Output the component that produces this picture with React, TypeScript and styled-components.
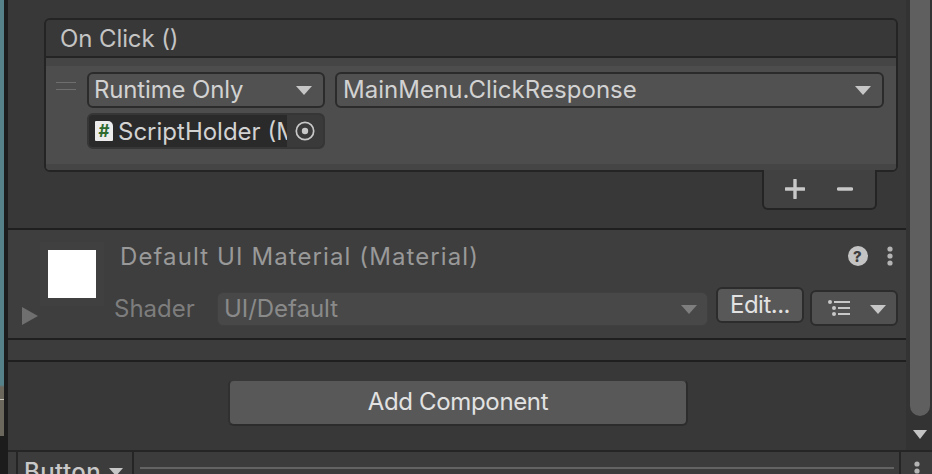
import React from 'react';
import styled, {createGlobalStyle} from 'styled-components';

const GlobalStyle = createGlobalStyle`
  html, body {
    margin: 0;
    width: 932px;
    height: 474px;
    overflow: hidden;
    background: #383838;
    font-family: Inter, "Noto Sans", sans-serif;
  }
`;

const Window = styled.div`
  display: grid;
  grid-template-columns: 8px 1fr;
  width: 932px;
  height: 474px;
  overflow: hidden;
`;

const LeftEdge = styled.div`
  display: grid;
  grid-template-columns: 4px 4px;
  background: #1c1c1c;
`;

const SceneStrip = styled.div`
  height: 436px;
  background: linear-gradient(#54818a 0, #54818a 385px, #6c675d 387px, #6c675d 399px, #c9c5bb 399px, #c9c5bb 400px, #6c675d 400px);
`;

const Main = styled.div`
  display: flex;
  flex-direction: column;
  min-width: 0;
`;

const Inspector = styled.div`
  display: grid;
  grid-template-columns: 898px 26px;
  height: 450px;
`;

const Content = styled.div`
  display: flex;
  flex-direction: column;
  background: #383838;
`;

const EventArea = styled.div`
  box-sizing: border-box;
  height: 230px;
  padding: 18px 0 0 36px;
  border-bottom: 2px solid #1f1f1f;
`;

const EventPanel = styled.div`
  width: 854px;
  height: 154px;
  box-sizing: border-box;
  border: 2px solid #242424;
  border-radius: 6px;
  overflow: hidden;
  display: flex;
  flex-direction: column;
`;

const EventHeader = styled.div`
  height: 38px;
  flex: none;
  box-sizing: border-box;
  padding-left: 14px;
  border-bottom: 2px solid #242424;
  background: #383838;
  color: #c4c4c4;
  font-size: 24px;
  line-height: 38px;
  letter-spacing: -0.1px;
`;

const EventBody = styled.div`
  flex: 1;
  background: #4d4d4d;
  border-top: 8px solid #454545;
  border-bottom: 6px solid #454545;
  display: grid;
  grid-template-columns: 21px 238px 549px;
  column-gap: 10px;
  padding: 6px 0 0 10px;
  align-content: start;
`;

const DragHandle = styled.div`
  width: 20px;
  height: 8px;
  margin-top: 10px;
  border-top: 1px solid #6e6e6e;
  border-bottom: 1px solid #6e6e6e;
  box-sizing: border-box;
`;

const Dropdown = styled.div<{$dim?: boolean}>`
  display: flex;
  align-items: center;
  justify-content: space-between;
  height: 36px;
  box-sizing: border-box;
  padding: 0 11px 2px 5px;
  border: 2px solid ${p => (p.$dim ? '#3a3a3a' : '#2b2b2b')};
  border-radius: 6px;
  background: ${p => (p.$dim ? '#484848' : '#515151')};
  color: ${p => (p.$dim ? '#8a8a8a' : '#d2d2d2')};
  font-size: 24px;
  letter-spacing: -0.15px;
  white-space: nowrap;
  overflow: hidden;
`;

const MethodDropdown = styled(Dropdown)`
  padding-left: 6px;
  letter-spacing: 0.05px;
`;

const Arrow = styled.i<{$dim?: boolean}>`
  display: block;
  flex: none;
  width: 0;
  height: 0;
  margin-top: 2px;
  border-left: 8px solid transparent;
  border-right: 8px solid transparent;
  border-top: 9px solid ${p => (p.$dim ? '#7e7e7e' : '#c6c6c6')};
`;

const ObjectField = styled.div`
  grid-column: 2;
  display: flex;
  align-items: center;
  height: 36px;
  margin-top: 5px;
  box-sizing: border-box;
  border: 2px solid #363636;
  border-radius: 6px;
  background: #2a2a2a;
  overflow: hidden;
  color: #d2d2d2;
  font-size: 24px;
`;

const ScriptIcon = styled.div`
  flex: none;
  width: 18px;
  height: 20px;
  margin: 0 5px 0 6px;
  background: #ececec;
  border-radius: 1px 5px 1px 1px;
  color: #2f6b2f;
  font-size: 17px;
  font-weight: 700;
  line-height: 20px;
  text-align: center;
`;

const ObjectName = styled.div`
  flex: 1;
  min-width: 0;
  overflow: hidden;
  white-space: nowrap;
`;

const PickerButton = styled.div`
  flex: none;
  width: 36px;
  height: 100%;
  background: #3a3a3a;
  display: flex;
  align-items: center;
  justify-content: center;
`;

const FooterTab = styled.div`
  display: flex;
  align-items: center;
  width: 115px;
  height: 40px;
  margin: -2px 0 0 718px;
  box-sizing: border-box;
  padding-left: 21px;
  gap: 32px;
  position: relative;
  background: #414141;
  border: 2px solid #242424;
  border-top: 0;
  border-radius: 0 0 6px 6px;
`;

const MaterialSection = styled.div`
  display: grid;
  grid-template-columns: 106px 1fr;
  height: 110px;
  flex: none;
  box-sizing: border-box;
  background: #3e3e3e;
  border-bottom: 2px solid #1f1f1f;
`;

const Preview = styled.div`
  display: flex;
  flex-direction: column;
  align-items: flex-start;
  padding: 20px 0 0 40px;
`;

const Swatch = styled.div`
  width: 48px;
  height: 48px;
  background: #fff;
  outline: 8px solid #404040;
`;

const Foldout = styled.i`
  display: block;
  width: 0;
  height: 0;
  margin: 9px 0 0 -26px;
  border-top: 9px solid transparent;
  border-bottom: 9px solid transparent;
  border-left: 16px solid #6f6f6f;
`;

const MaterialBody = styled.div`
  display: flex;
  flex-direction: column;
`;

const TitleRow = styled.div`
  display: flex;
  align-items: center;
  height: 52px;
  padding: 0 12px 0 6px;
  color: #999;
  font-size: 24px;
  letter-spacing: 1.1px;
`;

const Title = styled.div`
  flex: 1;
`;

const HeaderIcons = styled.div`
  display: flex;
  align-items: center;
  gap: 18px;
`;

const ShaderRow = styled.div`
  display: flex;
  align-items: flex-start;
  height: 36px;
  margin-top: 8px;
`;

const ShaderLabel = styled.div`
  width: 103px;
  color: #7d7d7d;
  font-size: 24px;
  line-height: 37px;
`;

const ShaderField = styled(Dropdown)`
  width: 491px;
  border-width: 1px;
  height: 34px;
  border-color: #404040;
  padding-left: 6px;
  padding-right: 10px;
  margin-top: 2px;
  letter-spacing: -0.05px;
`;

const EditButton = styled.div`
  width: 88px;
  height: 36px;
  margin: -3px 6px 0 8px;
  box-sizing: border-box;
  border: 2px solid #2c2c2c;
  border-radius: 6px;
  background: #585858;
  color: #e2e2e2;
  font-size: 24px;
  letter-spacing: -0.5px;
  line-height: 31px;
  text-align: center;
`;

const PresetButton = styled.div`
  display: flex;
  align-items: center;
  justify-content: space-between;
  width: 88px;
  height: 36px;
  box-sizing: border-box;
  padding: 0 10px 0 16px;
  border: 2px solid #2c2c2c;
  border-radius: 6px;
  background: #515151;
`;

const Spacer = styled.div`
  height: 22px;
  flex: none;
  background: #3c3c3c;
  border-bottom: 2px solid #1f1f1f;
  box-sizing: border-box;
`;

const AddArea = styled.div`
  flex: 1;
  display: flex;
  padding: 17px 0 0 220px;
  background: #383838;
`;

const AddButton = styled.div`
  width: 460px;
  height: 47px;
  box-sizing: border-box;
  border: 2px solid #2c2c2c;
  border-top-color: #383838;
  border-left-color: #303030;
  border-radius: 6px;
  background: #585858;
  color: #e2e2e2;
  font-size: 24px;
  letter-spacing: -0.35px;
  line-height: 41px;
  text-align: center;
`;

const Scrollbar = styled.div`
  display: flex;
  flex-direction: column;
  align-items: flex-start;
  background: #333;
  padding-left: 4px;
  box-sizing: border-box;
`;

const ScrollThumb = styled.div`
  width: 20px;
  height: 416px;
  background: #5f5f5f;
  border-radius: 0 0 10px 10px;
`;

const ScrollArrow = styled.i`
  display: block;
  width: 0;
  height: 0;
  margin: 14px 0 0 3px;
  border-left: 7px solid transparent;
  border-right: 7px solid transparent;
  border-top: 9px solid #c4c4c4;
`;

const TabBar = styled.div`
  flex: 1;
  display: flex;
  align-items: flex-start;
  background: #3c3c3c;
  border-top: 2px solid #252525;
  min-height: 0;
  overflow: hidden;
`;

const TabGap = styled.div`
  width: 10px;
  height: 100%;
  box-sizing: border-box;
  border-right: 2px solid #252525;
`;

const TabButton = styled.div`
  display: flex;
  gap: 8px;
  width: 116px;
  height: 100%;
  box-sizing: border-box;
  padding: 6px 0 0 6px;
  border-right: 2px solid #252525;
  color: #c8c8c8;
  font-size: 24px;
  font-weight: 500;
  letter-spacing: 0.4px;
  line-height: 28px;
`;

const TabArrow = styled(Arrow)`
  margin-top: 10px;
  border-left-width: 7px;
  border-right-width: 7px;
  border-top-width: 8px;
`;

const TabSearch = styled.div`
  width: 767px;
  height: 100%;
  padding: 15px 5px 0 6px;
  box-sizing: border-box;
  border-right: 2px solid #252525;
`;

const TabRule = styled.div`
  height: 2px;
  background: #636363;
`;

const TabMenu = styled.div`
  margin: 9px 0 0 12px;
`;

const Kebab = () => (
  <svg width="8" height="20" viewBox="0 0 8 20">
    <circle cx="4" cy="3" r="2.6" fill="#b4b4b4" />
    <circle cx="4" cy="10" r="2.6" fill="#b4b4b4" />
    <circle cx="4" cy="17" r="2.6" fill="#b4b4b4" />
  </svg>
);

export default function App() {
  return (
    <Window>
      <GlobalStyle />
      <LeftEdge>
        <SceneStrip />
      </LeftEdge>
      <Main>
        <Inspector>
          <Content>
            <EventArea>
              <EventPanel>
                <EventHeader>On Click ()</EventHeader>
                <EventBody>
                  <DragHandle />
                  <Dropdown>
                    Runtime Only
                    <Arrow />
                  </Dropdown>
                  <MethodDropdown>
                    MainMenu.ClickResponse
                    <Arrow />
                  </MethodDropdown>
                  <ObjectField>
                    <ScriptIcon>#</ScriptIcon>
                    <ObjectName>ScriptHolder (Mono Script)</ObjectName>
                    <PickerButton>
                      <svg width="20" height="20" viewBox="0 0 20 20">
                        <circle cx="10" cy="10" r="8.7" fill="none" stroke="#c8c8c8" strokeWidth="1.7" />
                        <circle cx="10" cy="10" r="3.2" fill="#c8c8c8" />
                      </svg>
                    </PickerButton>
                  </ObjectField>
                </EventBody>
              </EventPanel>
              <FooterTab>
                <svg width="20" height="20" viewBox="0 0 20 20">
                  <path d="M10 1v18M1 10h18" stroke="#c8c8c8" strokeWidth="3.4" strokeLinecap="round" />
                </svg>
                <svg width="16" height="4" viewBox="0 0 16 4">
                  <path d="M1.5 2h13" stroke="#c8c8c8" strokeWidth="3.4" strokeLinecap="round" />
                </svg>
              </FooterTab>
            </EventArea>
            <MaterialSection>
              <Preview>
                <Swatch />
                <Foldout />
              </Preview>
              <MaterialBody>
                <TitleRow>
                  <Title>Default UI Material (Material)</Title>
                  <HeaderIcons>
                    <svg width="20" height="20" viewBox="0 0 20 20">
                      <circle cx="10" cy="10" r="10" fill="#c4c4c4" />
                      <text x="10" y="15.5" textAnchor="middle" fontSize="15" fontWeight="800" fill="#3e3e3e" fontFamily="Inter, sans-serif">?</text>
                    </svg>
                    <Kebab />
                  </HeaderIcons>
                </TitleRow>
                <ShaderRow>
                  <ShaderLabel>Shader</ShaderLabel>
                  <ShaderField $dim>
                    UI/Default
                    <Arrow $dim />
                  </ShaderField>
                  <EditButton>Edit...</EditButton>
                  <PresetButton>
                    <svg width="22" height="16" viewBox="0 0 22 16">
                      <g fill="#c8c8c8">
                        <circle cx="2" cy="2" r="2" />
                        <circle cx="6" cy="8" r="2" />
                        <circle cx="6" cy="14" r="2" />
                        <rect x="6" y="1" width="16" height="2" />
                        <rect x="10" y="7" width="12" height="2" />
                        <rect x="10" y="13" width="12" height="2" />
                      </g>
                    </svg>
                    <Arrow />
                  </PresetButton>
                </ShaderRow>
              </MaterialBody>
            </MaterialSection>
            <Spacer />
            <AddArea>
              <AddButton>Add Component</AddButton>
            </AddArea>
          </Content>
          <Scrollbar>
            <ScrollThumb />
            <ScrollArrow />
          </Scrollbar>
        </Inspector>
        <TabBar>
          <TabGap />
          <TabButton>
            Button
            <TabArrow />
          </TabButton>
          <TabSearch>
            <TabRule />
          </TabSearch>
          <TabMenu>
            <Kebab />
          </TabMenu>
        </TabBar>
      </Main>
    </Window>
  );
}
